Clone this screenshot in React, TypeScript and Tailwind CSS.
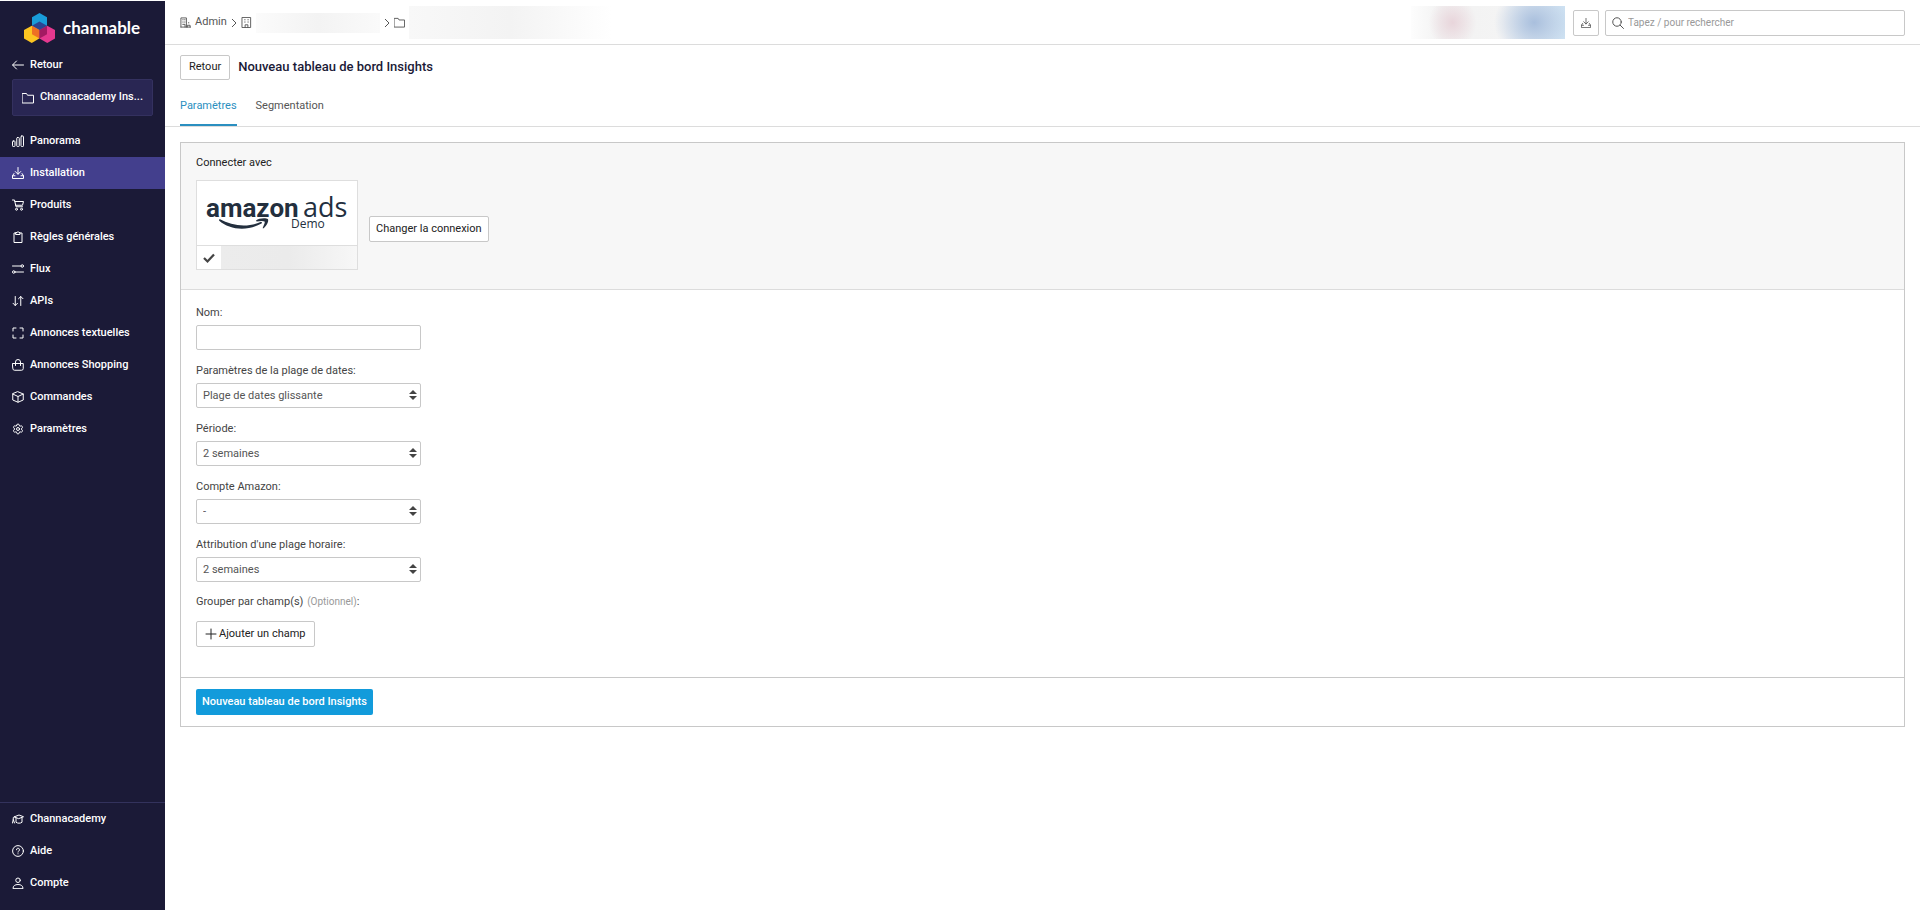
import React from "react";
import { Settings } from "lucide-react";

type IconProps = { className?: string; children: React.ReactNode };

const Icon = ({ className = "size-3", children }: IconProps) => (
  <svg
    viewBox="0 0 24 24"
    className={`shrink-0 ${className}`}
    fill="none"
    stroke="currentColor"
    strokeWidth="2"
    strokeLinecap="round"
    strokeLinejoin="round"
    aria-hidden="true"
  >
    {children}
  </svg>
);

const Chevron = () => (
  <svg viewBox="0 0 12 20" className="h-[10px] w-[6px] shrink-0" fill="none" stroke="currentColor" strokeWidth="2" aria-hidden="true">
    <path d="M2 2l8 8-8 8" />
  </svg>
);

const download = (
  <>
    <path d="M12 1v13M6.500 9l5.500 5.500L17.500 9" />
    <path d="M4 13l-3 4.500V23h22v-5.500L20 13" />
    <path d="M1 17.500h5M18 17.500h5" />
  </>
);

const folder = <path d="M1 3h8l2 3.500h12V22H1z" />;

const mainNav = [
  {
    label: "Panorama",
    icon: (
      <>
        <rect x="1" y="12" width="5" height="11" rx="1.500" />
        <rect x="9.500" y="5" width="5" height="18" rx="1.500" />
        <rect x="18" y="2" width="5" height="21" rx="1.500" />
      </>
    ),
  },
  { label: "Installation", icon: download, active: true },
  {
    label: "Produits",
    icon: (
      <>
        <path d="M1 2h4l3 13.500h13M6 5h17l-2 7.500H7.500" />
        <circle cx="9" cy="20.500" r="2" />
        <circle cx="19" cy="20.500" r="2" />
      </>
    ),
  },
  {
    label: "Règles générales",
    icon: (
      <>
        <path d="M8 4H4v19h16V4h-4" />
        <path d="M8 3h2.500l1.500-2 1.500 2H16v4H8z" />
      </>
    ),
  },
  {
    label: "Flux",
    icon: (
      <>
        <path d="M1 6h17M6 18h17" />
        <circle cx="20.500" cy="6" r="2.500" />
        <circle cx="3.500" cy="18" r="2.500" />
      </>
    ),
  },
  {
    label: "APIs",
    icon: <path d="M6.500 3v18M2 16.500l4.500 4.500 4.500-4.500M17.500 21V3M13 7.500L17.500 3 22 7.500" />,
  },
  {
    label: "Annonces textuelles",
    icon: <path d="M2 8V2h6M16 2h6v6M22 16v6h-6M8 22H2v-6" />,
  },
  {
    label: "Annonces Shopping",
    icon: (
      <>
        <path d="M1.500 9h21v10a3.500 3.500 0 0 1-3.500 3.500H5A3.500 3.500 0 0 1 1.500 19z" />
        <path d="M7 13V6a5 5 0 0 1 10 0v7" />
      </>
    ),
  },
  {
    label: "Commandes",
    icon: (
      <>
        <path d="M12 1.500 22.500 6v12L12 22.500 1.500 18V6z" />
        <path d="M1.500 6 12 11l10.500-5M12 11v11" />
      </>
    ),
  },
  { label: "Paramètres", icon: <Settings /> },
];

const footerNav = [
  {
    label: "Channacademy",
    icon: (
      <>
        <path d="M5 7.500 14 4l9 3.500-9 3.500zM5 7.500 2.500 9v4M1 20l1.500-7L5 20" />
        <path d="M8 10v8.500c3 2.500 9 2.500 12 0V10" />
      </>
    ),
  },
  {
    label: "Aide",
    icon: (
      <>
        <circle cx="12" cy="12" r="10.800" />
        <path d="M9 9.500a3 3 0 1 1 4.500 2.500c-1 .6-1.500 1-1.500 2.200M12 17.500v.2" />
      </>
    ),
  },
  {
    label: "Compte",
    icon: (
      <>
        <circle cx="12" cy="6.500" r="4.500" />
        <path d="M2 22.500c0-5 4-7.500 10-7.500s10 2.500 10 7.500z" />
      </>
    ),
  },
];

type NavItem = { label: string; icon: React.ReactNode; active?: boolean };

const NavList = ({ items }: { items: NavItem[] }) => (
  <ul>
    {items.map((item) => (
      <li key={item.label}>
        <a
          href="#"
          aria-current={item.active ? "page" : undefined}
          className={`flex h-8 items-center gap-[6px] px-3 ${item.active ? "bg-[#433f8d]" : ""}`}
        >
          <Icon>{item.icon}</Icon>
          {item.label}
        </a>
      </li>
    ))}
  </ul>
);

const ChannableMark = () => (
  <svg viewBox="0 0 62 60" className="h-[30px] w-[31px]" aria-hidden="true">
    <path d="M31 0l15 8.500v17L31 34l-15-8.500v-17z" fill="#199cd9" />
    <path d="M15.500 25.500l15 8.500v17l-15 9-15.500-9V34z" fill="#fcc521" />
    <path d="M46.500 25.500L62 34v17l-15.500 9-15.500-9V34z" fill="#e5388f" />
    <path d="M31 17l15 8.500L31 34l-15-8.500z" fill="#2b4391" />
    <path d="M16 25.500L31 34v17l-15-8.500z" fill="#ee7023" />
    <path d="M46 25.500L31 34v17l15-8.500z" fill="#a31a62" />
  </svg>
);

const Sidebar = () => (
  <aside className="flex w-[165px] shrink-0 flex-col bg-[#1b1a37] text-[11px] font-medium text-white">
    <a href="#" className="flex items-center gap-2 pt-[11px] pl-6 font-[Lato] text-[17px] leading-[30px] font-bold">
      <ChannableMark />
      <span className="pt-px">channable</span>
    </a>
    <a href="#" className="mt-[13px] flex h-[18px] items-center gap-[6px] px-3">
      <Icon>
        <path d="M23 12H2M9 4l-8 8 8 8" />
      </Icon>
      Retour
    </a>
    <button
      type="button"
      className="mx-3 mt-[5px] flex h-[37px] items-center gap-[6px] rounded-xs border border-[#34315f] bg-[#292653] px-[9px] text-left"
    >
      <Icon>{folder}</Icon>
      <span>Channacademy Ins...</span>
    </button>
    <nav className="mt-[9px] flex-1">
      <NavList items={mainNav} />
    </nav>
    <nav className="border-t border-[#33325c] pb-[11px]">
      <NavList items={footerNav} />
    </nav>
  </aside>
);

const Header = () => (
  <header className="flex h-11 items-center border-b border-[#dcdcdc] px-[15px] text-[11px] text-[#555]">
    <nav className="flex items-center gap-1">
      <Icon className="size-[11px]">
        <path d="M2 22V2h12v20M2 22h21M6 6h1M10 6h1M6 11h1M10 11h1M6 16h5v6" />
        <path d="M19 12v1M16 22v-4h6v4" />
      </Icon>
      <a href="#" className="pb-px">
        Admin
      </a>
      <Chevron />
      <Icon className="size-[11px]">
        <path d="M3 1h18v22H3zM8 6h1M15 6h1M8 11h1M15 11h1M9 23v-6h6v6" />
      </Icon>
      <div className="h-5 w-[124px] bg-linear-to-r from-[#fbfbfb] via-[#f3f3f3] to-[#fafafa]" />
      <Chevron />
      <Icon className="size-[11px]">{folder}</Icon>
      <div className="h-[33px] w-[203px] bg-linear-to-r from-[#f8f8f8] via-[#f3f3f3] to-white" />
    </nav>
    <div className="ml-auto flex items-center">
      <div className="mr-2 h-[33px] w-[154px] bg-[radial-gradient(ellipse_24px_26px_at_27%_50%,#e8d5db,transparent),radial-gradient(ellipse_40px_36px_at_80%_50%,#a9bfdd,transparent),linear-gradient(to_right,#fdfdfd,#f2f2f2_20%,#f4f4f4_60%,#d3e6f5)]" />
      <button
        type="button"
        aria-label="Télécharger"
        className="mr-[6px] flex size-[26px] items-center justify-center rounded-xs border border-[#c8c8c8]"
      >
        <Icon className="size-[10px]">{download}</Icon>
      </button>
      <label className="flex h-[26px] w-[300px] items-center gap-1 rounded-xs border border-[#c8c8c8] px-[6px]">
        <Icon>
          <circle cx="10" cy="10" r="8.500" />
          <path d="M16.500 16.500 23 23" />
        </Icon>
        <input
          type="search"
          aria-label="Rechercher"
          placeholder="Tapez / pour rechercher"
          className="min-w-0 flex-1 text-[10px] outline-none placeholder:text-[#999]"
        />
      </label>
    </div>
  </header>
);

const outlineButton =
  "flex items-center justify-center rounded-xs border border-[#c8c8c8] bg-white text-[11px] text-[#222]";

const AmazonAdsLogo = () => (
  <svg viewBox="0 0 160 64" className="h-16 w-full" fill="#232f3e" role="img" aria-label="amazon ads Demo">
    <text x="9" y="36" fontFamily="Roboto" fontWeight="700" fontSize="26">amazon</text>
    <text x="106" y="36" fontFamily="Open Sans" fontSize="27">ads</text>
    <text x="94" y="47" fontFamily="Open Sans" fontSize="12">Demo</text>
    <path d="M22.500 38c13 7.500 29 8.500 41 3 1.500-.5 2 .7 1 1.500-14 8-32 6.500-42.500-3z" />
    <path d="M59 39.500c3-2.500 10-3 12-1.200.8 2-1 6.500-4.500 9-.5.2-1 0-.7-.5 1-2.500 2.500-5 1.800-6.200-1.500-1-5-.5-8 0z" />
  </svg>
);

const ConnectionSection = () => (
  <section className="border-b border-[#dcdcdc] bg-[#f7f7f7] px-[15px] pt-[11px] pb-[19px]">
    <h2 className="text-[11px] leading-[18px] text-[#222]">Connecter avec</h2>
    <div className="mt-2 flex items-center gap-[11px]">
      <div className="w-[162px] border border-[#dedede] bg-white">
        <AmazonAdsLogo />
        <div className="flex h-6 border-t border-[#dedede]">
          <div className="flex w-6 items-center justify-center text-[#444]">
            <svg viewBox="0 0 24 24" className="size-3" fill="none" stroke="currentColor" strokeWidth="4.500" aria-hidden="true">
              <path d="M2 12l7 7L22 5" />
            </svg>
          </div>
          <div className="flex-1 bg-linear-to-r from-[#ececec] via-[#ebebeb] to-[#f7f7f7]" />
        </div>
      </div>
      <button type="button" className={`${outlineButton} mt-2 h-[26px] px-[6px]`}>
        Changer la connexion
      </button>
    </div>
  </section>
);

const selects = [
  { id: "date-range", label: "Paramètres de la plage de dates:", value: "Plage de dates glissante" },
  { id: "period", label: "Période:", value: "2 semaines" },
  { id: "account", label: "Compte Amazon:", value: "-" },
  { id: "attribution", label: "Attribution d'une plage horaire:", value: "2 semaines" },
];

const SelectField = ({ id, label, value }: { id: string; label: string; value: string }) => (
  <div>
    <label htmlFor={id} className="mb-[2px] block leading-5">
      {label}
    </label>
    <div className="relative">
      <select
        id={id}
        className="block h-[25px] w-full appearance-none rounded-xs border border-[#c8c8c8] bg-white px-[6px] pt-px text-[#555]"
      >
        <option>{value}</option>
      </select>
      <svg
        viewBox="0 0 8 10"
        className="pointer-events-none absolute top-[7px] right-1 h-[10px] w-2"
        fill="#444"
        aria-hidden="true"
      >
        <path d="M4 0l4 4H0zM4 10l4-4H0z" />
      </svg>
    </div>
  </div>
);

const App = () => {
  return (
    <div className="flex min-h-screen bg-white pt-px font-[Roboto,sans-serif]">
      <Sidebar />
      <div className="min-w-0 flex-1">
        <Header />
        <div className="flex items-center gap-2 px-[15px] pt-[10px]">
          <button type="button" className={`${outlineButton} h-[25px] px-2`}>
            Retour
          </button>
          <h1 className="pb-px text-[13px] leading-5 font-medium text-[#1b1a37]">Nouveau tableau de bord Insights</h1>
        </div>
        <nav className="mt-2 flex h-[39px] gap-[19px] border-b border-[#dcdcdc] px-[15px] text-[11px] leading-9">
          <a href="#" aria-current="page" className="border-b-2 border-[#2b8fc0] text-[#2b8fc0]">
            Paramètres
          </a>
          <a href="#" className="text-[#555]">
            Segmentation
          </a>
        </nav>
        <main className="p-[15px]">
          <div className="border border-[#c8c8c8]">
            <ConnectionSection />
            <form className="text-[11px] text-[#444]">
              <div className="flex flex-col gap-[11px] px-[15px] pt-[13px] pb-[30px]">
                <div className="flex w-[225px] flex-col gap-[11px]">
                  <div>
                    <label htmlFor="name" className="mb-[2px] block leading-5">
                      Nom:
                    </label>
                    <input
                      id="name"
                      type="text"
                      className="block h-[25px] w-full rounded-xs border border-[#c8c8c8] px-[6px]"
                    />
                  </div>
                  {selects.map((field) => (
                    <SelectField key={field.id} {...field} />
                  ))}
                </div>
                <div>
                  <p className="mb-[10px] leading-[18px]">
                    Grouper par champ(s) <span className="ml-px text-[10px] text-[#999]">(Optionnel)</span>:
                  </p>
                  <button type="button" className={`${outlineButton} h-[26px] gap-[2px] px-2`}>
                    <Icon>
                      <path d="M12 2v20M2 12h20" />
                    </Icon>
                    Ajouter un champ
                  </button>
                </div>
              </div>
              <div className="border-t border-[#c8c8c8] px-[15px] py-[11px]">
                <button type="button" className="block h-[26px] rounded-xs bg-[#129bdb] px-[6px] font-medium text-white">
                  Nouveau tableau de bord Insights
                </button>
              </div>
            </form>
          </div>
        </main>
      </div>
    </div>
  );
};

export default App;
